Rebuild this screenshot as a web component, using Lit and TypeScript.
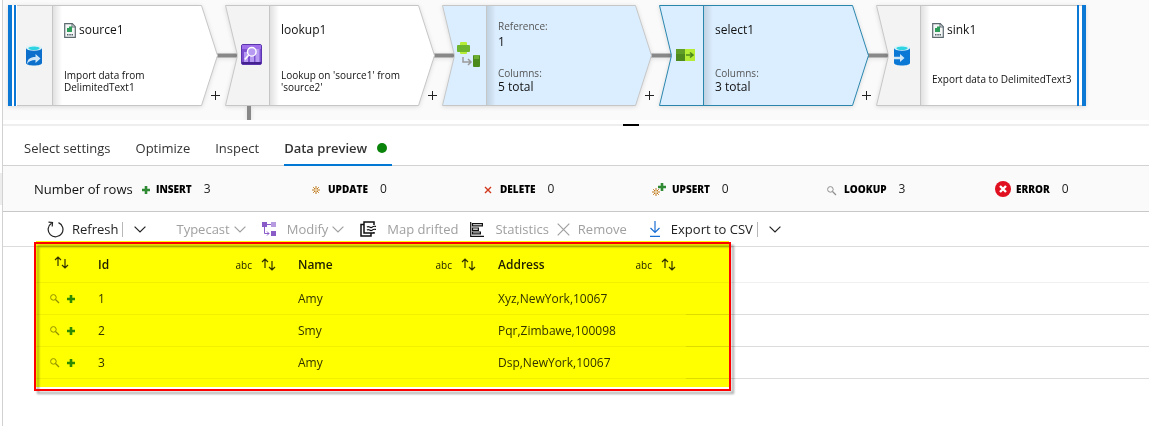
import { LitElement, html, svg, css, nothing, TemplateResult } from "lit";
import { customElement, property } from "lit/decorators.js";
import { classMap } from "lit/directives/class-map.js";

const sourceIcon = svg`
  <path d="M1 3v15c0 1.600 3.500 2.500 8 2.500s8-.9 8-2.500V3z" fill="#0b6fcb"/>
  <ellipse cx="9" cy="3" rx="8" ry="2.700" fill="#d9f3f8"/>
  <ellipse cx="9" cy="3.200" rx="5.600" ry="1.700" fill="#2fd3e2"/>
  <path d="M2 19c.5-5 3-7 8.500-7V9l5 4.500-5 4.500v-3c-4 0-6.500 1-8.500 4z" fill="#cfe6f7"/>`;

const sinkIcon = svg`
  <path d="M1 3v15c0 1.600 3.500 2.500 8 2.500s8-.9 8-2.500V3z" fill="#0b78d6"/>
  <ellipse cx="9" cy="3" rx="8" ry="2.700" fill="#d9f3f8"/>
  <ellipse cx="9" cy="3.200" rx="5.600" ry="1.700" fill="#2fd3e2"/>
  <path d="M1 11.800h6V9l4.500 4L7 17v-2.800H1z" fill="#cfe6f7"/>`;

const lookupIcon = svg`
  <rect x=".5" y=".5" width="20" height="20" rx="1.500" fill="#7d50d2" stroke="#5b35ad"/>
  <rect x="1" y="1" width="19" height="4" fill="#a070ea"/>
  <path d="M3 8h4v10H3zM9 8h4v10H9zM14.500 5h4v13h-4z" fill="#b79bf2"/>
  <circle cx="10.800" cy="7.800" r="4.300" fill="#b79bf2" stroke="#fff" stroke-width="1.400"/>
  <path d="M7.600 11.200L3.800 15.500" stroke="#fff" stroke-width="1.700"/>
  <path d="M1 19h19" stroke="#43218f" stroke-width="2"/>`;

const referenceIcon = svg`
  <rect x="3" y="0" width="7" height="12" rx="1" fill="#b4ec36"/>
  <rect x="0" y="3" width="13" height="7" rx="1" fill="#6cb52d"/>
  <path d="M6 15v5h8M11 17l3 3-3 3" fill="none" stroke="#9a9a9a" stroke-width="1.500"/>
  <rect x="16" y="13" width="7" height="12" rx="1" fill="#4c8a1c"/>
  <rect x="17" y="13" width="5" height="4" fill="#6cae2f"/>`;

const selectIcon = svg`
  <rect x="0" y="0" width="9" height="12" fill="#4f8a1f"/>
  <rect x="0" y="0" width="9" height="5" fill="#609e28"/>
  <rect x="9" y="0" width="10" height="12" fill="#b4ec36"/>
  <path d="M10 6h7M14 3.500L17 6l-3 2.500" fill="none" stroke="#4c8a1c" stroke-width="1.600"/>`;

const csvIcon = html`<svg class="csv" width="12" height="15" viewBox="0 0 12 15" aria-hidden="true">
  <path d="M.7.700h7.600l3 3v10.600H.700z" fill="#f4f6f6" stroke="#5c6a70" stroke-width="1.200"/>
  <path d="M8 .700v3.300h3.300" fill="none" stroke="#5c6a70"/>
  <path d="M3 5h5v4H3zM5 3.500h3V6H5z" fill="#2f9e5a"/>
  <path d="M3 11.800h1.500M5.300 11.800h1.500M7.500 11.800H9" stroke="#53636b" stroke-width="1.600"/>
</svg>`;

const plusMark = svg`<path d="M2.700 0h2.600v2.700H8v2.600H5.300V8H2.700V5.300H0V2.700h2.700z" fill="#2f8a33"/>`;
const starMark = svg`<path d="M4 0v8M0 4h8M1.200 1.200l5.600 5.600M6.800 1.200L1.200 6.800" stroke="#c07a1c" stroke-width="1"/><circle cx="4" cy="4" r="1" fill="#fff3dd"/>`;
const glassMark = svg`<g fill="none" stroke="#8f8f8f"><circle cx="3.400" cy="3.400" r="2.800"/><path d="M5.500 5.500L9 9" stroke-width="1.200"/></g>`;

const chevron = html`<svg width="12" height="7" viewBox="0 0 12 7" aria-hidden="true"><path d="M.6.600L6 6 11.400.600" fill="none" stroke="currentColor" stroke-width="1.200"/></svg>`;
const sortIcon = html`<svg width="15" height="13" viewBox="0 0 15 13" aria-hidden="true"><path d="M4 10V1M1 4l3-3 3 3M11 3v9M8 9l3 3 3-3" fill="none" stroke="#333" stroke-width="1.200"/></svg>`;

interface FlowNode {
  kind: "source" | "middle" | "sink";
  tone: "plain" | "blue" | "active";
  icon: TemplateResult;
  title?: string;
  file?: boolean;
  note?: string;
  stats?: [string, string][];
  branch?: boolean;
}

const NODES: FlowNode[] = [
  { kind: "source", tone: "plain", icon: svg`<g transform="translate(17 40)">${sourceIcon}</g>`, title: "source1", file: true, note: "Import data from DelimitedText1" },
  { kind: "middle", tone: "plain", icon: svg`<g transform="translate(16 39)">${lookupIcon}</g>`, title: "lookup1", note: "Lookup on 'source1' from 'source2'", branch: true },
  { kind: "middle", tone: "blue", icon: svg`<g transform="translate(15 37)">${referenceIcon}</g>`, stats: [["Reference:", "1"], ["Columns:", "5 total"]] },
  { kind: "middle", tone: "active", icon: svg`<g transform="translate(17 44)">${selectIcon}</g>`, title: "select1", stats: [["Columns:", "3 total"]] },
  { kind: "sink", tone: "plain", icon: svg`<g transform="translate(17 40)">${sinkIcon}</g>`, title: "sink1", file: true, note: "Export data to DelimitedText3" },
];

@customElement("flow-node")
class FlowNodeElement extends LitElement {
  @property({ attribute: false }) node!: FlowNode;

  static styles = css`
    :host { display: block; flex: none; width: 210px; position: relative; }
    .node { display: grid; height: 101px; }
    .shape, .body { grid-area: 1 / 1; }
    .shape { overflow: visible; filter: drop-shadow(0 1px 2px rgba(0, 0, 0, 0.12)); }
    .body { display: flex; flex-direction: column; justify-content: space-between; padding: 16px 12px 13px 56px; z-index: 1; }
    .body.counted { padding-bottom: 12px; }
    .body.stacked { padding-top: 14px; }
    .title { display: flex; align-items: center; gap: 3px; margin: 0; font-size: 12px; line-height: 18px; font-weight: 500; color: #111; }
    .csv { flex: none; }
    .note { margin: 0; font-size: 10px; line-height: 12px; color: #111; }
    .sink .note { padding-bottom: 8px; white-space: nowrap; }
    .sink .body { padding-right: 0; }
    .stat { font-size: 10px; line-height: 14px; color: #555; }
    .value { display: block; font-size: 12px; line-height: 14px; font-weight: 500; color: #111; }
    .loose .value { line-height: 18px; }
    .add { position: absolute; right: -2px; bottom: 6px; width: 9px; height: 9px; border: 0; padding: 0; background: none; display: block; }
    .add svg { display: block; }
  `;

  render() {
    const n = this.node;
    const stroke = n.tone === "active" ? "#2a86ad" : "#c6c6c6";
    const band = n.tone === "plain" ? "#f3f3f3" : "#dbeeff";
    const fill = n.tone === "plain" ? "#fff" : "#dbeeff";
    const outline =
      n.kind === "source" ? "M.5.5H193.500L209.500 50.500L193.500 100.500H.5z"
      : n.kind === "sink" ? "M.5.5H209.500V100.500H.5L12.500 50.500z"
      : "M.5.5H193.500L209.500 50.500L193.500 100.500H.5L12.500 50.500z";
    const left = n.kind === "source" ? "M.5.5H44.500V100.500H.5z" : "M.5.5H44.500V100.500H.5L12.500 50.500z";
    return html`<section class=${classMap({ node: true, [n.kind]: true })}>
      <svg class="shape" width="210" height="101" viewBox="0 0 210 101" aria-hidden="true">
        <defs><linearGradient id="fold"><stop offset="0" stop-color="#000" stop-opacity=".12"/><stop offset="1" stop-color="#000" stop-opacity="0"/></linearGradient></defs>
        ${n.kind !== "sink" ? svg`<path d="M209 50.500h20" stroke="#888" stroke-width="4"/>` : nothing}
        ${n.branch ? svg`<path d="M24 101v14" stroke="#888" stroke-width="4"/>` : nothing}
        <path d=${outline} fill=${fill}/>
        <path d=${left} fill=${band}/>
        <rect x="45" y="1" width="9" height="99" fill="url(#fold)"/>
        <path d="M44.500.5v100" stroke=${stroke}/>
        <path d=${outline} fill="none" stroke=${stroke}/>
        ${n.kind === "source" ? svg`<path d="M0 0h9v101H0z" fill="#fff"/><path d="M0 0h4v101H0zM6 0h2v101H6z" fill="#0b78d6"/>` : nothing}
        ${n.kind === "sink" ? svg`<path d="M201 0h2v101h-2zM206 0h4v101h-4z" fill="#0b78d6"/>` : nothing}
        ${n.icon}
      </svg>
      <div class=${classMap({ body: true, stacked: !n.title, counted: !!n.stats })}>
        ${n.title ? html`<h3 class="title">${n.file ? csvIcon : nothing}${n.title}</h3>` : nothing}
        ${n.note ? html`<p class="note">${n.note}</p>` : nothing}
        ${(n.stats ?? []).map((s, i) => html`<div class=${classMap({ stat: true, loose: !n.title && i === 0 })}>${s[0]}<span class="value">${s[1]}</span></div>`)}
      </div>
    </section>
    ${n.kind !== "sink" ? html`<button class="add" aria-label="Add step"><svg width="9" height="9" viewBox="0 0 9 9"><path d="M4.500 0v9M0 4.500h9" stroke="#222"/></svg></button>` : nothing}`;
  }
}

const COUNTS: { label: string; value: number; icon: TemplateResult }[] = [
  { label: "INSERT", value: 3, icon: svg`<g transform="translate(9 6)">${plusMark}</g>` },
  { label: "UPDATE", value: 0, icon: svg`<g transform="translate(7 6)">${starMark}</g>` },
  { label: "DELETE", value: 0, icon: svg`<path d="M8 7l6 6M14 7l-6 6" stroke="#d0371c" stroke-width="1.400"/>` },
  { label: "UPSERT", value: 0, icon: svg`<g transform="translate(3 8)">${starMark}</g><g transform="translate(9 3)">${plusMark}</g>` },
  { label: "LOOKUP", value: 3, icon: svg`<g transform="translate(6 6)">${glassMark}</g>` },
  { label: "ERROR", value: 0, icon: svg`<circle cx="10" cy="9" r="8" fill="#e01020"/><path d="M7 6l6 6M13 6l-6 6" stroke="#fff" stroke-width="2.400"/>` },
];

const COLUMNS = ["Id", "Name", "Address"];
const ROWS = [
  ["1", "Amy", "Xyz,NewYork,10067"],
  ["2", "Smy", "Pqr,Zimbawe,100098"],
  ["3", "Amy", "Dsp,NewYork,10067"],
];

@customElement("app-root")
class AppRoot extends LitElement {
  static styles = css`
    :host { display: flex; min-height: 100vh; background: #fff; color: #222; font-family: "Open Sans", "Noto Sans", sans-serif; font-size: 13px; line-height: 20px; overflow: hidden; }
    * { box-sizing: border-box; }
    button { font: inherit; color: inherit; background: none; border: 0; padding: 0; }
    svg { display: block; flex: none; }
    .rail { flex: none; width: 3px; border-right: 1px solid #d2d2d2; padding-top: 173px; }
    .grip { height: 32px; background: #ededed; }
    .main { flex: 1; min-width: 0; }
    .graph { display: flex; gap: 7px; padding: 5px 5px 14px; background: #fafafa; overflow: hidden; }
    .splitter { display: flex; justify-content: center; padding-top: 4px; }
    .bar { flex: 1; height: 2px; background: #eee; display: flex; justify-content: center; padding-right: 4px; }
    .handle { width: 16px; height: 2px; background: #000; margin-left: 114px; }
    .tabs { display: flex; gap: 25px; height: 40px; padding-left: 21px; border-bottom: 1px solid #d2d2d2; }
    .tab { display: flex; align-items: center; gap: 10px; height: 40px; padding-top: 6px; border-bottom: 2px solid transparent; white-space: nowrap; color: #333; }
    .tab.on { font-weight: 600; border-bottom-color: #0078d4; padding-right: 5px; }
    .dot { width: 10px; height: 10px; border-radius: 50%; background: #0a830a; }
    .counts { display: flex; align-items: center; height: 46px; padding-left: 31px; background: #fafafa; border-bottom: 1px solid #c8c8c8; }
    .caption { width: 99px; white-space: nowrap; font-size: 13px; color: #111; }
    .list { display: grid; grid-template-columns: repeat(5, 172px) auto; margin: 0; }
    .count { display: flex; align-items: center; white-space: nowrap; }
    .count dt { display: flex; align-items: center; gap: 5px; font-size: 10px; font-weight: 800; color: #000; }
    .count dd { margin: 0 0 0 12px; font-size: 12px; }
    .tools { display: flex; align-items: center; height: 35px; padding-left: 44px; border-bottom: 1px solid #dcdcdc; white-space: nowrap; }
    .tool { display: flex; align-items: center; gap: 8px; color: #222; }
    .tool:disabled { color: #a0a0a0; }
    .tight { gap: 4px; }
    .wide { gap: 10px; }
    .rule { width: 1px; height: 15px; background: #b8b8b8; margin: 0 11px 0 4px; }
    .gap-xs { margin-left: 8px; }
    .gap-s { margin-left: 12px; }
    .gap-m { margin-left: 16px; }
    .gap-l { margin-left: 22px; }
    .gap-xl { margin-left: 30px; }
    .preview { position: relative; padding-left: 33px; }
    .grid { width: 100%; table-layout: fixed; border-collapse: separate; border-spacing: 0; font-size: 12px; }
    .grid th, .grid td { text-align: left; padding: 0 10px 0 12px; border-bottom: 1px solid #f0f0f0; }
    .grid th { height: 36px; font-weight: 600; }
    .grid td { height: 32px; color: #333; }
    .grid td.rest { border-bottom-color: #dcdcdc; }
    .c0 { width: 50px; }
    .cx { width: 200px; }
    .grid th.mark { padding: 0 0 0 18px; }
    .grid td.mark { padding: 0 0 0 14px; }
    .marks { display: flex; align-items: center; gap: 7px; }
    .head { display: flex; align-items: center; }
    .type { margin-left: auto; margin-right: 9px; font-size: 10px; font-weight: 400; line-height: 14px; }
    .highlight { position: absolute; left: 33px; top: -6px; width: 693px; height: 146px; background: #ff0; mix-blend-mode: multiply; pointer-events: none; }
    .frame { position: absolute; left: 31px; top: -5px; width: 697px; height: 149px; border: 2px solid #f00; filter: drop-shadow(3px 3px 1px rgba(0, 0, 0, 0.35)); pointer-events: none; }
  `;

  render() {
    return html`
      <div class="rail"><div class="grip"></div></div>
      <main class="main">
        <div class="graph">${NODES.map((n) => html`<flow-node .node=${n}></flow-node>`)}</div>
        <div class="splitter"><div class="bar"><div class="handle"></div></div></div>
        <nav class="tabs" role="tablist">
          ${["Select settings", "Optimize", "Inspect"].map((t) => html`<button class="tab" role="tab">${t}</button>`)}
          <button class="tab on" role="tab" aria-selected="true">Data preview<span class="dot"></span></button>
        </nav>
        <div class="counts">
          <span class="caption">Number of rows</span>
          <dl class="list">
            ${COUNTS.map((c) => html`<div class="count">
              <dt><svg width="18" height="18" viewBox="0 0 18 18" aria-hidden="true">${c.icon}</svg>${c.label}</dt>
              <dd>${c.value}</dd>
            </div>`)}
          </dl>
        </div>
        <div class="tools" role="toolbar">
          <button class="tool"><svg width="17" height="17" viewBox="0 0 17 17" aria-hidden="true"><path d="M11.500 1.600A7.400 7.400 0 1 1 4.500 2.200M1.500 1.200l4 .3-.3 4" fill="none" stroke="#222" stroke-width="1.200"/></svg>Refresh</button>
          <span class="rule"></span>
          <button class="tool" aria-label="Refresh options">${chevron}</button>
          <button class="tool tight gap-xl" disabled>Typecast ${chevron}</button>
          <button class="tool tight gap-m" disabled>
            <svg width="21" height="15" viewBox="0 0 21 15" aria-hidden="true"><path d="M0 0h5v5H0z" fill="#8a5cc8"/><path d="M9 0h5v5H9z" fill="#b79be0"/><path d="M9 9h5v5H9z" fill="#8a5cc8"/><path d="M5 2.500h4M2.500 5v6.500H7M5 9.500l2 2-2 2" fill="none" stroke="#8a5cc8"/></svg>
            Modify ${chevron}</button>
          <button class="tool wide gap-m" disabled>
            <svg width="17" height="16" viewBox="0 0 17 16" aria-hidden="true"><path d="M14 4V1H4v11h10v-1M4 3.500H1V15h10v-3" fill="none" stroke="#111" stroke-width="1.500"/><path d="M7 6.200c2-2 3 1.500 5 0s2.500-1 4-.7M7 9.200c2-2 3 1.500 5 0s2.500-1 4-.7" fill="none" stroke="#111" stroke-width="1.200"/></svg>
            Map drifted</button>
          <button class="tool wide gap-s" disabled>
            <svg width="15" height="15" viewBox="0 0 15 15" aria-hidden="true"><path d="M.7 0v14.300H14M2.500 1.600h9.900v2.300H2.500zM2.500 6h5.900v2.300H2.500zM2.500 10h7.900v1.800H2.500z" fill="none" stroke="#111" stroke-width="1.200"/></svg>
            Statistics</button>
          <button class="tool gap-xs" disabled>
            <svg width="13" height="13" viewBox="0 0 13 13" aria-hidden="true"><path d="M.7.700l11.600 11.600M12.300.700L.7 12.300" stroke="#a0a0a0" stroke-width="1.200"/></svg>
            Remove</button>
          <button class="tool wide gap-l">
            <svg width="12" height="16" viewBox="0 0 12 16" aria-hidden="true"><path d="M6 0v11M1.500 7L6 11.500 10.500 7M1 15.400h10" fill="none" stroke="#1a6fd4" stroke-width="1.200"/></svg>
            Export to CSV</button>
          <span class="rule"></span>
          <button class="tool" aria-label="Export options">${chevron}</button>
        </div>
        <div class="preview">
          <table class="grid">
            <colgroup><col class="c0">${COLUMNS.map(() => html`<col class="cx">`)}<col></colgroup>
            <thead><tr>
              <th class="mark"><button aria-label="Sort by change">${sortIcon}</button></th>
              ${COLUMNS.map((c) => html`<th><div class="head">${c}<span class="type">abc</span><button aria-label="Sort by ${c}">${sortIcon}</button></div></th>`)}
              <th></th>
            </tr></thead>
            <tbody>${ROWS.map((r) => html`<tr>
              <td class="mark"><div class="marks">
                <svg width="10" height="10" viewBox="0 0 10 10" aria-hidden="true">${glassMark}</svg>
                <svg width="8" height="8" viewBox="0 0 8 8" aria-hidden="true">${plusMark}</svg>
              </div></td>
              ${r.map((v) => html`<td>${v}</td>`)}
              <td class="rest"></td>
            </tr>`)}</tbody>
          </table>
          <div class="highlight"></div>
          <div class="frame"></div>
        </div>
      </main>`;
  }
}
